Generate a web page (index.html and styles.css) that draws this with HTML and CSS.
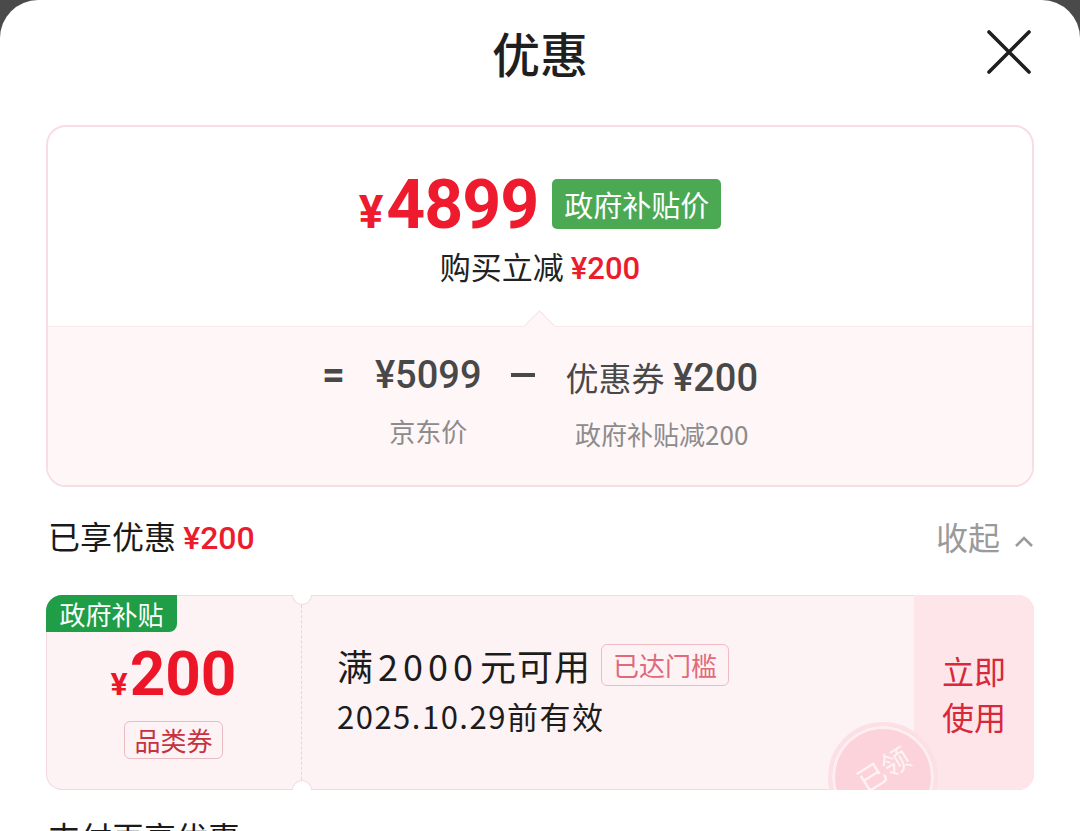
FILE: index.html
```html
<!DOCTYPE html>
<html lang="zh-CN">
<head>
    <meta charset="UTF-8">
    <meta name="viewport" content="width=device-width, initial-scale=1.0">
    <title>优惠</title>
    <link rel="stylesheet" href="styles.css">
</head>
<body>
    <div class="sheet">
        <div class="header">
            <div></div>
            <h1 class="title">优惠</h1>
            <button class="close" aria-label="关闭">
                <svg width="44" height="44" viewBox="0 0 44 44">
                    <path d="M2 2 L42 42 M42 2 L2 42" stroke="#1f1f1f" stroke-width="3.6" stroke-linecap="round"/>
                </svg>
            </button>
        </div>

        <div class="price-card">
            <div class="price-top">
                <div class="price-row">
                    <span class="price"><span class="yen">¥</span>4899</span>
                    <span class="gov-badge">政府补贴价</span>
                </div>
                <div class="price-sub">购买立减 <span class="red num">¥200</span></div>
            </div>
            <div class="price-bottom">
                <div class="formula">
                    <div class="op">=</div>
                    <div class="term">
                        <div class="term-main num">¥5099</div>
                        <div class="term-label">京东价</div>
                    </div>
                    <div class="op"><span class="minus"></span></div>
                    <div class="term">
                        <div class="term-main"><span class="cjk">优惠券</span> <span class="num">¥200</span></div>
                        <div class="term-label">政府补贴减200</div>
                    </div>
                </div>
            </div>
        </div>

        <div class="section-head">
            <div class="section-title">已享优惠 <span class="red num">¥200</span></div>
            <div class="collapse">收起
                <svg width="20" height="12" viewBox="0 0 20 12">
                    <polyline points="2,11 10,3 18,11" fill="none" stroke="#9a9a9a" stroke-width="2.6"/>
                </svg>
            </div>
        </div>

        <div class="coupon">
            <div class="coupon-left">
                <span class="coupon-tag">政府补贴</span>
                <div class="coupon-amount"><span class="yen">¥</span>200</div>
                <span class="coupon-type">品类券</span>
            </div>
            <div class="coupon-mid">
                <div class="coupon-rule">满<span class="digits">2000</span>元可用 <span class="reached">已达门槛</span></div>
                <div class="coupon-date">2025.10.29前有效</div>
            </div>
            <div class="coupon-right">立即<br>使用</div>
            <div class="stamp"><span>已领</span></div>
        </div>

        <div class="section-title next">支付再享优惠</div>
    </div>
</body>
</html>
```

FILE: styles.css
```css
body {
    margin: 0;
    background-color: #4a4a4a;
    font-family: "Noto Sans CJK SC", "Noto Sans", sans-serif;
    color: #1f1f1f;
}
.sheet {
    background: #ffffff;
    height: 100vh;
    border-radius: 38px 38px 0 0;
    overflow: hidden;
}
.header {
    height: 104px;
    display: grid;
    grid-template-columns: 1fr auto 1fr;
    align-items: center;
}
.title {
    margin: 0;
    font-size: 48px;
    font-weight: 500;
    line-height: 1;
}
.close {
    justify-self: end;
    margin-right: 49px;
    padding: 0;
    border: none;
    background: none;
    width: 44px;
    height: 44px;
}
.num {
    font-family: Roboto, "Noto Sans CJK SC", sans-serif;
}
.red {
    color: #ec1c2c;
}

/* price card */
.price-card {
    margin: 21px 46px 0;
    border: 2px solid #f8dde2;
    border-radius: 20px;
    overflow: hidden;
}
.price-top {
    padding: 49px 0 37px;
    text-align: center;
}
.price-row {
    display: flex;
    justify-content: center;
    align-items: center;
    height: 56px;
}
.price {
    margin-top: 8px;
    font-family: Roboto, sans-serif;
    font-weight: 700;
    font-size: 68px;
    line-height: 56px;
    color: #ee1a2e;
    letter-spacing: -1px;
}
.price .yen {
    font-size: 46px;
    margin-right: 4px;
}
.gov-badge {
    margin-left: 14px;
    height: 50px;
    line-height: 50px;
    padding: 0 12px;
    background: #4ba853;
    color: #ffffff;
    font-size: 29px;
    border-radius: 5px;
}
.price-sub {
    margin-top: 14px;
    font-size: 31px;
    line-height: 40px;
    color: #222222;
}
.price-sub .num {
    font-weight: 500;
}
.price-bottom {
    position: relative;
    background: #fff6f8;
    border-top: 1px solid #f9e8ec;
    padding: 24px 0 33px;
}
.price-bottom::before {
    content: "";
    position: absolute;
    top: -12px;
    left: 50%;
    width: 22px;
    height: 22px;
    margin-left: -12px;
    background: #fff6f8;
    border-top: 1px solid #f9e4e9;
    border-left: 1px solid #f9e4e9;
    transform: rotate(45deg);
}
.formula {
    display: flex;
    justify-content: center;
    align-items: flex-start;
    gap: 30px;
    color: #484848;
}
.op {
    display: flex;
    align-items: center;
    height: 48px;
    font-family: Roboto, sans-serif;
    font-size: 40px;
    font-weight: 700;
    line-height: 48px;
}
.minus {
    display: block;
    width: 24px;
    height: 4px;
    background: #484848;
}
.term {
    text-align: center;
}
.term-main {
    font-size: 38px;
    font-weight: 500;
    line-height: 48px;
}
.term-main .cjk {
    font-size: 33px;
    font-weight: 400;
}
.term-label {
    margin-top: 14px;
    font-size: 26px;
    line-height: 36px;
    color: #8c8c8c;
}

/* section headers */
.section-head {
    display: flex;
    justify-content: space-between;
    align-items: center;
    height: 60px;
    margin: 19px 46px 0 48px;
}
.section-title {
    font-size: 32px;
    line-height: 44px;
    color: #1a1a1a;
}
.section-title .num {
    font-weight: 500;
}
.collapse {
    display: flex;
    align-items: center;
    gap: 14px;
    font-size: 32px;
    color: #9a9a9a;
}
.collapse svg {
    margin-top: 10px;
}
.section-title.next {
    margin: 24px 48px 0;
}

/* coupon */
.coupon {
    position: relative;
    display: flex;
    height: 195px;
    margin: 29px 46px 0;
    background: #fdf3f5;
    box-shadow: inset 0 0 0 1px #f3dadf;
    border-radius: 16px;
    overflow: hidden;
}
.coupon-left {
    position: relative;
    width: 256px;
    border-right: 1px dashed #f1cfd5;
    display: flex;
    flex-direction: column;
    align-items: center;
    padding-top: 50px;
    box-sizing: border-box;
}
.coupon-left::before,
.coupon-left::after {
    content: "";
    position: absolute;
    right: -10px;
    width: 18px;
    height: 18px;
    border-radius: 50%;
    background: #ffffff;
    box-shadow: 0 0 0 1px #f3dadf;
}
.coupon-left::before {
    top: -9px;
}
.coupon-left::after {
    bottom: -9px;
}
.coupon-tag {
    position: absolute;
    top: 0;
    left: 0;
    width: 131px;
    height: 37px;
    line-height: 37px;
    text-align: center;
    background: #1f9e47;
    color: #ffffff;
    font-size: 26px;
    border-radius: 0 0 8px 0;
}
.coupon-amount {
    font-family: Roboto, sans-serif;
    font-weight: 700;
    font-size: 62px;
    line-height: 58px;
    color: #ec1628;
}
.coupon-amount .yen {
    font-size: 32px;
    margin-right: 2px;
}
.coupon-type {
    margin-top: 8px;
    height: 36px;
    line-height: 36px;
    padding: 0 9px;
    font-size: 26px;
    color: #c6323f;
    border: 1px solid #e9bcc3;
    border-radius: 6px;
}
.coupon-mid {
    flex: 1;
    display: flex;
    flex-direction: column;
    justify-content: center;
    padding-left: 35px;
    padding-bottom: 8px;
}
.coupon-rule {
    display: flex;
    align-items: center;
    font-size: 36px;
    line-height: 50px;
    letter-spacing: 1px;
    color: #1c1c1c;
}
.coupon-rule .digits {
    letter-spacing: 5px;
    margin: 0 2px 0 4px;
}
.reached {
    margin-left: 10px;
    height: 40px;
    line-height: 40px;
    padding: 0 11px;
    font-size: 26px;
    letter-spacing: 0;
    color: #e0697a;
    border: 1px solid #f2bac3;
    border-radius: 6px;
}
.coupon-date {
    margin-top: 4px;
    font-size: 31px;
    line-height: 44px;
    letter-spacing: 1.5px;
    color: #1c1c1c;
}
.coupon-right {
    width: 120px;
    background: #fde5ea;
    color: #d8283a;
    font-size: 32px;
    line-height: 46px;
    display: flex;
    align-items: center;
    justify-content: center;
    text-align: center;
}
.stamp {
    position: absolute;
    left: 782px;
    top: 127px;
    width: 110px;
    height: 110px;
    box-sizing: border-box;
    border-radius: 50%;
    border: 4px solid #fbe1e6;
    background: #fcd3da;
    box-shadow: inset 0 0 0 3px #fdeef1;
    display: flex;
    justify-content: center;
    padding-top: 26px;
}
.stamp span {
    font-size: 28px;
    line-height: 32px;
    color: #fff3f5;
    transform: rotate(-32deg);
    height: 32px;
}
```
